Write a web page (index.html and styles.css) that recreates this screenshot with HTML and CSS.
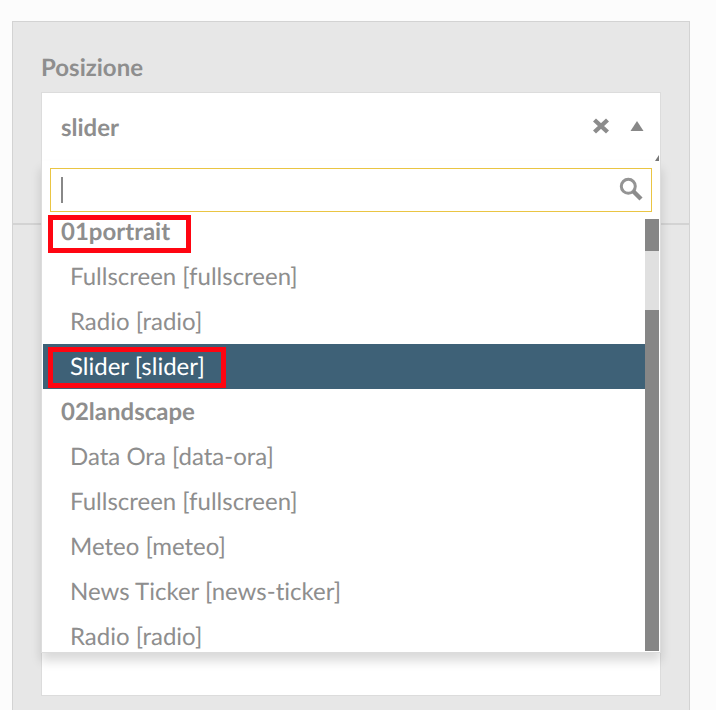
FILE: index.html
```html
<!DOCTYPE html>
<html lang="it">
<head>
<meta charset="utf-8">
<title>Posizione</title>
<link rel="stylesheet" href="styles.css">
</head>
<body>
<main class="form">
  <section class="panel">
    <label class="label" for="position">Posizione</label>
    <div class="select">
      <div class="select-head">
        <button class="select-value" id="position" type="button" aria-haspopup="listbox" aria-expanded="true">slider</button>
        <button class="icon-button" type="button" aria-label="Rimuovi">
          <svg width="18" height="18" viewBox="0 0 18 18"><path d="M2.5 3L15.5 15M15.5 3L2.5 15" stroke="#8c8c8c" stroke-width="4.4" fill="none"/></svg>
        </button>
        <button class="icon-button" type="button" aria-label="Chiudi">
          <svg width="18" height="18" viewBox="0 0 18 18"><path d="M9 4L15.5 14H2.5Z" fill="#888"/></svg>
        </button>
        <svg class="corner" width="4" height="6" viewBox="0 0 4 6"><path d="M4 0V6H0Z" fill="#777"/></svg>
      </div>
      <div class="dropdown">
        <div class="search">
          <input class="search-input" type="text" aria-label="Cerca">
          <span class="caret"></span>
          <svg class="search-icon" width="24" height="24" viewBox="0 0 24 24"><circle cx="9.3" cy="9.3" r="7" fill="none" stroke="#949494" stroke-width="3"/><path d="M14 14L22 22" stroke="#8c8c8c" stroke-width="4.4" fill="none"/></svg>
        </div>
        <div class="results">
          <ul class="list" role="listbox" aria-label="Posizione">
            <li class="group group-first" role="presentation">01portrait</li>
            <li class="option" role="option">Fullscreen [fullscreen]</li>
            <li class="option" role="option">Radio [radio]</li>
            <li class="option selected" role="option" aria-selected="true">Slider [slider]</li>
            <li class="group" role="presentation">02landscape</li>
            <li class="option" role="option">Data Ora [data-ora]</li>
            <li class="option" role="option">Fullscreen [fullscreen]</li>
            <li class="option" role="option">Meteo [meteo]</li>
            <li class="option" role="option">News Ticker [news-ticker]</li>
            <li class="option option-last" role="option">Radio [radio]</li>
          </ul>
          <div class="scrollbar"><div class="thumb"></div></div>
        </div>
        <span class="mark mark-group"></span>
        <span class="mark mark-option"></span>
      </div>
    </div>
  </section>
  <section class="panel panel-rest">
    <textarea class="notes" aria-label="Note"></textarea>
  </section>
</main>
</body>
</html>
```
FILE: styles.css
```css
* {
  box-sizing: border-box;
}

body {
  margin: 0;
  background: #fcfcfc;
  color: #8e8e8e;
  font: 24px/43px Lato, sans-serif;
  font-variant-ligatures: none;
  text-rendering: geometricPrecision;
}

button,
input,
textarea {
  margin: 0;
  padding: 0;
  border: 0;
  background: none;
  color: inherit;
  font: inherit;
  text-rendering: inherit;
  outline: none;
}

.form {
  display: flex;
  flex-direction: column;
  min-height: 100vh;
  padding: 21px 26px 0 12px;
}

.panel {
  padding: 24px 28px 60px;
  border: 1px solid #d3d3d3;
  background: #e7e7e7;
}

.panel-rest {
  flex: 1;
  padding: 28px 28px 13px;
  border-bottom: 0;
}

.label {
  display: block;
  height: 46px;
  font-weight: 700;
}

.select {
  position: relative;
}

.select-head {
  display: flex;
  align-items: center;
  height: 71px;
  padding: 0 14px 0 19px;
  border: 1px solid #dcdcdc;
  border-bottom: 0;
  background: #fff;
}

.select-value {
  flex: 1;
  padding-bottom: 2px;
  font-weight: 700;
  text-align: left;
}

.icon-button {
  display: flex;
  margin-left: 18px;
  padding-bottom: 4px;
}

.corner {
  position: absolute;
  top: 63px;
  right: 2px;
}

.dropdown {
  position: absolute;
  z-index: 1;
  top: 69px;
  left: 0;
  right: 0;
  padding: 7px 1px 1px;
  border: 1px solid #dcdcdc;
  border-top: 0;
  background: #fff;
  box-shadow: 0 8px 10px rgba(0, 0, 0, 0.15);
}

.search {
  position: relative;
  margin: 0 7px 7px;
}

.search-input {
  display: block;
  width: 100%;
  height: 44px;
  padding: 0 40px 0 10px;
  border: 1px solid #eac543;
}

.caret {
  position: absolute;
  top: 9px;
  left: 11px;
  width: 2px;
  height: 26px;
  background: #888;
}

.search-icon {
  position: absolute;
  top: 9px;
  right: 9px;
}

.results {
  display: flex;
}

.list {
  flex: 1;
  margin: 0;
  padding: 0;
  list-style: none;
}

.group {
  padding: 1px 0 1px 18px;
  font-weight: 700;
}

.group-first {
  padding-top: 0;
  padding-bottom: 9px;
  line-height: 26px;
}

.option {
  padding: 1px 0 1px 27px;
}

.option-last {
  height: 37px;
}

.selected {
  background: #3e6177;
  color: #fff;
}

.scrollbar {
  width: 14px;
  padding-top: 32px;
  background: #868686;
}

.thumb {
  height: 59px;
  background: #e0e0e0;
}

.mark {
  position: absolute;
  left: 6px;
  border: 5px solid #ff0511;
}

.mark-group {
  top: 54px;
  width: 143px;
  height: 38px;
}

.mark-option {
  top: 186px;
  width: 178px;
  height: 41px;
}

.notes {
  display: block;
  width: 100%;
  height: 443px;
  border: 1px solid #dcdcdc;
  background: #fff;
  resize: none;
}
```
